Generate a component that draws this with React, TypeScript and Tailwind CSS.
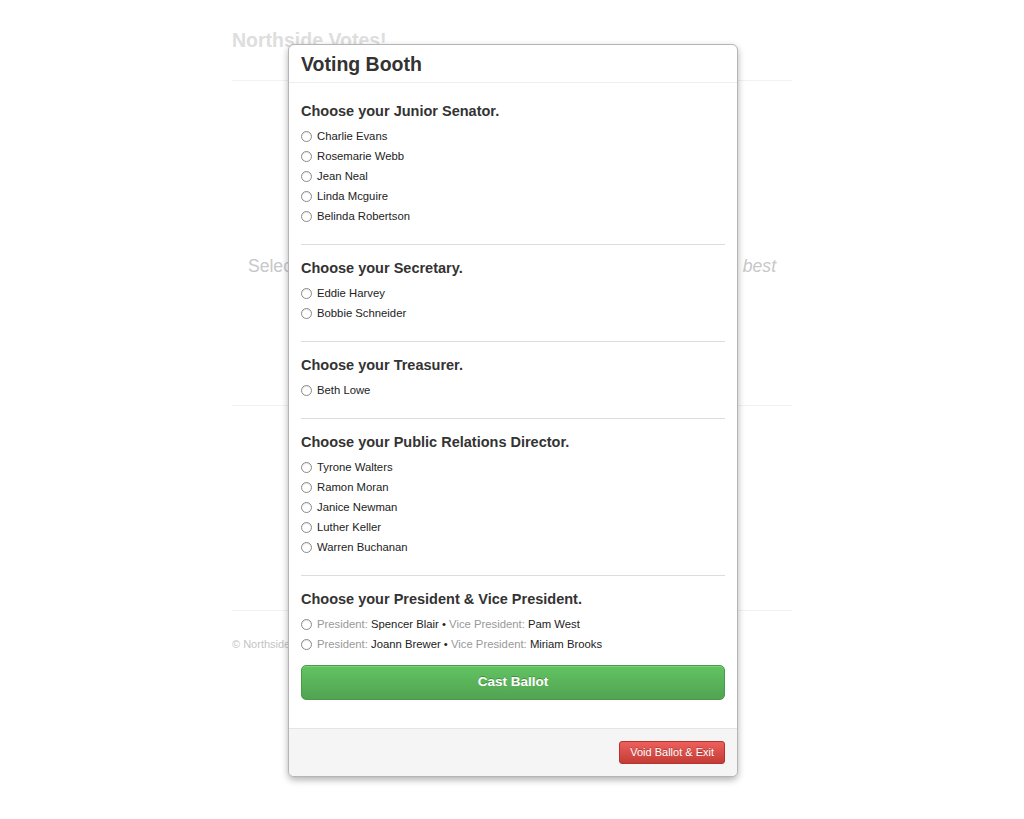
import React from "react";

type Race = {
  title: string;
  options: React.ReactNode[];
};

const races: Race[] = [
  {
    title: "Choose your Junior Senator.",
    options: ["Charlie Evans", "Rosemarie Webb", "Jean Neal", "Linda Mcguire", "Belinda Robertson"],
  },
  {
    title: "Choose your Secretary.",
    options: ["Eddie Harvey", "Bobbie Schneider"],
  },
  {
    title: "Choose your Treasurer.",
    options: ["Beth Lowe"],
  },
  {
    title: "Choose your Public Relations Director.",
    options: ["Tyrone Walters", "Ramon Moran", "Janice Newman", "Luther Keller", "Warren Buchanan"],
  },
];

const tickets = [
  { president: "Spencer Blair", vice: "Pam West" },
  { president: "Joann Brewer", vice: "Miriam Brooks" },
];

function Radio({ children }: { children: React.ReactNode }) {
  return (
    <label className="flex items-center gap-[5px] h-[20px] text-[11.3px] text-[#222]">
      <span className="shrink-0 w-[11px] h-[11px] rounded-full border border-[#8a8a8a] bg-white shadow-[inset_0_1px_1px_rgba(0,0,0,0.1)]" />
      <span className="whitespace-pre">{children}</span>
    </label>
  );
}

function Section({ title, children, last }: { title: string; children: React.ReactNode; last?: boolean }) {
  return (
    <div className={last ? "" : "pb-[18px] mb-[13px] border-b border-[#dcdcdc]"}>
      <h4 className="text-[14.5px] leading-[20px] font-bold text-[#333] mb-[5px]">{title}</h4>
      <div className="flex flex-col">{children}</div>
    </div>
  );
}

export default function App() {
  return (
    <div className="relative min-h-[819px] bg-white font-['Liberation_Sans',Arial,sans-serif]">
      {/* faded page behind the modal */}
      <div className="w-[560px] mx-auto">
        <div className="pt-[28px] pb-[28px] border-b border-[#f2f2f2]">
          <h1 className="text-[19.5px] leading-[24px] font-bold text-[#dedede]">Northside Votes!</h1>
        </div>
        <div className="h-[325px] pt-[174px] border-b border-[#f2f2f2] flex justify-center">
          <p className="text-[17.6px] leading-[22px] text-[#c8c8c8] whitespace-nowrap">
            Select the candidates who you feel will represent Northside the <em>best</em>
          </p>
        </div>
        <div className="h-[205px] border-b border-[#f2f2f2]" />
        <p className="pt-[26px] text-[11px] leading-[14px] text-[#c4c4c4]">© Northside Votes 2013</p>
      </div>

      {/* modal */}
      <div className="absolute top-[44px] left-1/2 -ml-[224px] w-[450px] bg-white border border-[#b5b5b5] rounded-[6px] shadow-[0_3px_7px_rgba(0,0,0,0.3)] overflow-hidden">
        <div className="h-[38px] px-[12px] flex items-center border-b border-[#eeeeee]">
          <h3 className="text-[19.5px] leading-[24px] font-bold text-[#333]">Voting Booth</h3>
        </div>
        <div className="px-[12px] pt-[18px] pb-[28px]">
          {races.map((race) => (
            <Section key={race.title} title={race.title}>
              {race.options.map((o, i) => (
                <Radio key={i}>{o}</Radio>
              ))}
            </Section>
          ))}
          <Section title="Choose your President & Vice President." last>
            {tickets.map((t) => (
              <Radio key={t.president}>
                <span className="text-[#999]">President:</span> {t.president} •{" "}
                <span className="text-[#999]">Vice President:</span> {t.vice}
              </Radio>
            ))}
          </Section>
          <button className="mt-[11px] w-full h-[35px] rounded-[5px] border border-[#4a9a4a] bg-gradient-to-b from-[#62c462] to-[#51a351] text-white text-[13.5px] font-bold [text-shadow:0_-1px_0_rgba(0,0,0,0.25)] shadow-[inset_0_1px_0_rgba(255,255,255,0.2)]">
            Cast Ballot
          </button>
        </div>
        <div className="bg-[#f5f5f5] border-t border-[#e5e5e5] px-[12px] py-[12px] flex justify-end">
          <button className="h-[23px] px-[10px] rounded-[3px] border border-[#b3332d] bg-gradient-to-b from-[#ee5f5b] to-[#c43c35] text-white text-[11px] leading-[21px] [text-shadow:0_-1px_0_rgba(0,0,0,0.25)]">
            Void Ballot &amp; Exit
          </button>
        </div>
      </div>
    </div>
  );
}
